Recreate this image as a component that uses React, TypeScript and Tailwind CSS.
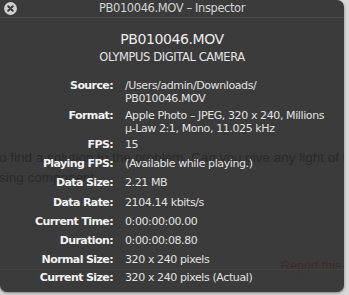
import React from "react"

type Row = {
  label: string
  lines: string[]
  gap: string
}

const rows: Row[] = [
  { label: "Source:", lines: ["/Users/admin/Downloads/", "PB010046.MOV"], gap: "mb-[4px]" },
  { label: "Format:", lines: ["Apple Photo – JPEG, 320 x 240, Millions", "μ-Law 2:1, Mono, 11.025 kHz"], gap: "mb-[3px]" },
  { label: "FPS:", lines: ["15"], gap: "mb-[6px]" },
  { label: "Playing FPS:", lines: ["(Available while playing.)"], gap: "mb-[6px]" },
  { label: "Data Size:", lines: ["2.21 MB"], gap: "mb-[7px]" },
  { label: "Data Rate:", lines: ["2104.14 kbits/s"], gap: "mb-[6px]" },
  { label: "Current Time:", lines: ["0:00:00:00.00"], gap: "mb-[6px]" },
  { label: "Duration:", lines: ["0:00:00:08.80"], gap: "mb-[6px]" },
  { label: "Normal Size:", lines: ["320 x 240 pixels"], gap: "mb-[5px]" },
  { label: "Current Size:", lines: ["320 x 240 pixels (Actual)"], gap: "mb-0" },
]

const CloseButton = () => (
  <svg width="13" height="13" viewBox="0 0 13 13" className="block">
    <circle cx="6.5" cy="6.5" r="6.4" fill="#d0d0d0" />
    <path d="M4.2 4.2 L8.8 8.8 M8.8 4.2 L4.2 8.8" stroke="#3a3a3a" strokeWidth="2" strokeLinecap="round" />
  </svg>
)

export default function App() {
  return (
    <div className="relative w-[349px] h-[295px] overflow-hidden bg-[#d9d9d9] font-['DejaVu_Sans',sans-serif]">
      {/* Inspector window (HUD) */}
      <div className="absolute left-0 top-0 w-[344px] h-[292px] overflow-hidden rounded-tr-[7px] rounded-b-[7px] bg-[#3b3b3b] shadow-[0_1px_3px_rgba(0,0,0,0.45)] text-[#e6e6e6]">
        {/* page text showing through the translucent HUD */}
        <div className="absolute inset-0 pt-[148px] text-[13.5px] leading-[20px] text-[#2a2a2a] font-['Liberation_Sans',sans-serif] whitespace-nowrap">
          <div className="-ml-[1px]">o find a solution to the problem. Can you give any light of w</div>
          <div className="-ml-[1px]">sing component.</div>
          <div className="mt-[68px] ml-[281px] text-[12.5px] text-[#42292b]">Report this</div>
        </div>
        <div className="absolute left-0 right-0 top-[269px] h-px bg-[#424242]" />

        <div className="relative">
          {/* title bar */}
          <div className="relative h-[18px] border-b border-[#4b4b4b] flex items-center justify-center">
            <div className="absolute left-[4px] top-[2px]">
              <CloseButton />
            </div>
            <span className="text-[11.5px] leading-[14px] text-[#d4d4d4] tracking-[-0.4px] mt-[-1px]">PB010046.MOV – Inspector</span>
          </div>

          {/* header */}
          <div className="flex flex-col items-center pt-[13px]">
            <div className="text-[14px] leading-[16px] text-[#ececec] tracking-[-0.4px]">PB010046.MOV</div>
            <div className="mt-[3px] text-[11.5px] leading-[14px] text-[#e4e4e4] tracking-[-0.4px]">OLYMPUS DIGITAL CAMERA</div>
          </div>

          {/* properties */}
          <div className="mt-[15px] flex flex-col text-[11px] leading-[13px]">
            {rows.map((row) => (
              <div key={row.label} className={`flex ${row.gap}`}>
                <div className="w-[113px] shrink-0 text-right font-bold text-[#f2f2f2] tracking-[-0.6px] whitespace-nowrap">
                  {row.label}
                </div>
                <div className="ml-[12px] tracking-[-0.4px] text-[#e2e2e2] whitespace-nowrap">
                  {row.lines.map((line) => (
                    <div key={line}>{line}</div>
                  ))}
                </div>
              </div>
            ))}
          </div>
        </div>
      </div>
    </div>
  )
}
